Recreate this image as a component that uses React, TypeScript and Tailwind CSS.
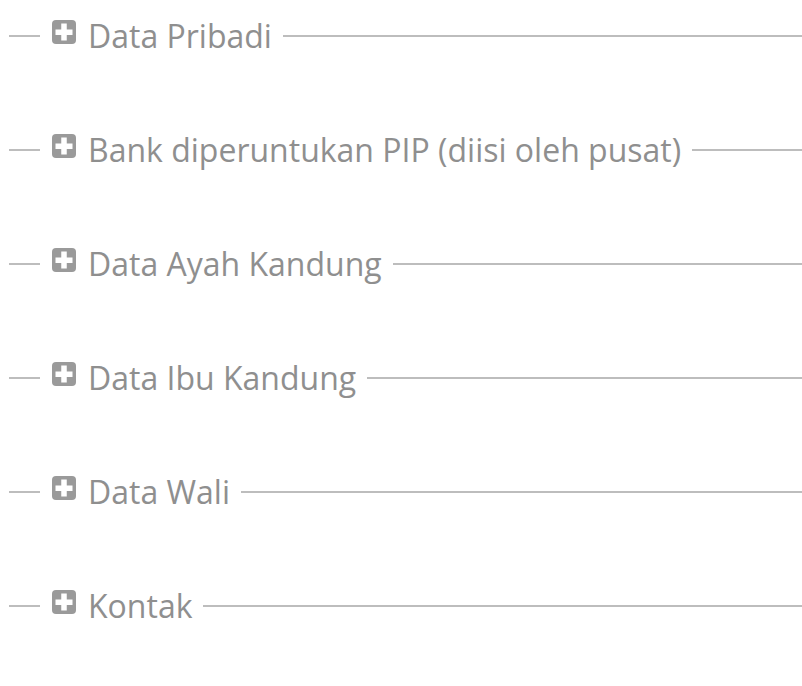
import React from "react";

const items = [
  "Data Pribadi",
  "Bank diperuntukan PIP (diisi oleh pusat)",
  "Data Ayah Kandung",
  "Data Ibu Kandung",
  "Data Wali",
  "Kontak",
];

function PlusSquare() {
  return (
    <svg width="24" height="24" viewBox="0 0 24 24" className="shrink-0">
      <rect x="0" y="0" width="24" height="24" rx="4" fill="#9a9a9a" />
      <rect x="3.5" y="9.5" width="17" height="5.5" fill="#fff" />
      <rect x="9.25" y="3.5" width="5.5" height="17" fill="#fff" />
    </svg>
  );
}

export default function App() {
  return (
    <div
      className="w-[802px] h-[686px] bg-white flex flex-col gap-[74px] pt-[16px] overflow-hidden"
      style={{ fontFamily: '"Open Sans", sans-serif' }}
    >
      {items.map((t) => (
        <div key={t} className="flex items-center h-10">
          <div className="ml-[9px] w-[31px] h-[2px] bg-[#bdbdbd] shrink-0" />
          <div className="flex items-center pl-[12px] pr-[11px] gap-[12px]">
            <div className="-mt-[8px]">
              <PlusSquare />
            </div>
            <span className="text-[32px] leading-none text-[#8f8f8f] whitespace-nowrap">{t}</span>
          </div>
          <div className="flex-1 h-[2px] bg-[#bdbdbd]" />
        </div>
      ))}
    </div>
  );
}
